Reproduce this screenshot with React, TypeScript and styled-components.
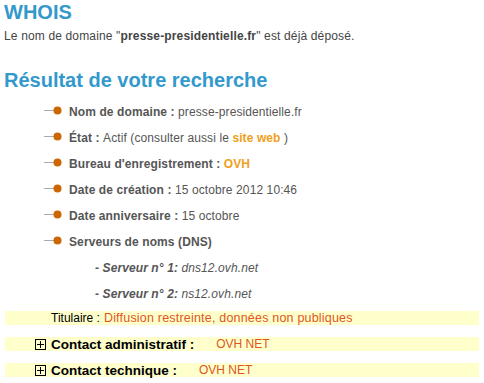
import type { ReactNode } from 'react';
import styled, { createGlobalStyle } from 'styled-components';

const GlobalStyle = createGlobalStyle`
  html, body {
    margin: 0;
    padding: 0;
    background: #fff;
  }
  body {
    font-family: "Liberation Sans", Arial, sans-serif;
    font-size: 12px;
    color: #555;
  }
`;

type Item = { label: string; value: ReactNode };

const servers = [
  { n: 1, host: 'dns12.ovh.net' },
  { n: 2, host: 'ns12.ovh.net' },
];

function BulletIcon() {
  return (
    <Bullet width="18" height="9" viewBox="0 0 18 9">
      <line x1="0" y1="4.5" x2="11" y2="4.5" stroke="#aaa" strokeWidth="1" />
      <circle cx="13.5" cy="4.5" r="4" fill="#cc6600" />
    </Bullet>
  );
}

export default function App() {
  const items: Item[] = [
    { label: 'Nom de domaine :', value: 'presse-presidentielle.fr' },
    {
      label: 'État :',
      value: (
        <>
          Actif (consulter aussi le <Accent>site web</Accent> )
        </>
      ),
    },
    { label: "Bureau d'enregistrement :", value: <Accent>OVH</Accent> },
    { label: 'Date de création :', value: '15 octobre 2012 10:46' },
    { label: 'Date anniversaire :', value: '15 octobre' },
    { label: 'Serveurs de noms (DNS)', value: null },
  ];

  return (
    <Page>
      <GlobalStyle />
      <Title>WHOIS</Title>
      <Intro>
        Le nom de domaine "<b>presse-presidentielle.fr</b>" est déjà déposé.
      </Intro>
      <Heading>Résultat de votre recherche</Heading>
      <List>
        {items.map((it) => (
          <Row key={it.label}>
            <BulletIcon />
            <Label>{it.label}</Label>
            {it.value && <span>&nbsp;{it.value}</span>}
          </Row>
        ))}
        {servers.map((s) => (
          <ServerRow key={s.n}>
            <b>- Serveur n° {s.n}:</b> {s.host}
          </ServerRow>
        ))}
      </List>
      <Bars>
        <Bar>
          <BarLabel>Titulaire :</BarLabel>
          <Restricted>Diffusion restreinte, données non publiques</Restricted>
        </Bar>
        <Bar>
          <PlusBox />
          <ContactLabel>Contact administratif :</ContactLabel>
          <ContactValue>OVH NET</ContactValue>
        </Bar>
        <Bar>
          <PlusBox />
          <ContactLabel>Contact technique :</ContactLabel>
          <ContactValue>OVH NET</ContactValue>
        </Bar>
      </Bars>
    </Page>
  );
}

const Page = styled.div`
  width: 484px;
  height: 383px;
  overflow: hidden;
  padding-top: 1px;
  box-sizing: border-box;
`;

const Title = styled.h1`
  margin: 0 0 0 4px;
  font-size: 20px;
  line-height: 23px;
  font-weight: bold;
  color: #3399cc;
`;

const Intro = styled.p`
  margin: 5px 0 0 4px;
  line-height: 14px;
  color: #444;
  letter-spacing: 0.15px;
`;

const Heading = styled.h2`
  margin: 26px 0 0 4px;
  font-size: 20px;
  line-height: 23px;
  font-weight: bold;
  color: #3399cc;
`;

const List = styled.div`
  margin-top: 6px;
  display: flex;
  flex-direction: column;
  letter-spacing: 0.1px;
`;

const Row = styled.div`
  display: flex;
  align-items: center;
  height: 26px;
  padding-left: 44px;
  padding-top: 1px;
  box-sizing: border-box;
  white-space: nowrap;
`;

const Bullet = styled.svg`
  display: block;
  flex: none;
  margin-top: -3px;
  margin-right: 7px;
`;

const Label = styled.b`
  color: #555;
`;

const Accent = styled.b`
  color: #f0a020;
`;

const ServerRow = styled.div`
  height: 26px;
  line-height: 26px;
  padding-left: 95px;
  padding-top: 1px;
  box-sizing: border-box;
  font-style: italic;
  color: #555;
`;

const Bars = styled.div`
  margin-top: 5px;
  padding: 0 5px;
  display: flex;
  flex-direction: column;
  gap: 12px;
`;

const Bar = styled.div`
  display: flex;
  align-items: center;
  height: 14px;
  background: #ffffcc;
  padding-left: 46px;
  position: relative;
  white-space: nowrap;
`;

const BarLabel = styled.span`
  color: #000;
  margin-right: 4px;
`;

const Restricted = styled.span`
  font-size: 12.5px;
  letter-spacing: 0.2px;
  color: #e0561c;
`;

const PlusBox = styled.span`
  position: absolute;
  left: 30px;
  top: 2px;
  width: 9px;
  height: 9px;
  border: 1px solid #000;
  &::before,
  &::after {
    content: '';
    position: absolute;
    background: #000;
  }
  &::before {
    left: 1px;
    right: 1px;
    top: 4px;
    height: 1px;
  }
  &::after {
    top: 1px;
    bottom: 1px;
    left: 4px;
    width: 1px;
  }
`;

const ContactLabel = styled.b`
  font-size: 13.5px;
  color: #000;
`;

const ContactValue = styled.span`
  margin-left: 22px;
  color: #e0561c;
`;
